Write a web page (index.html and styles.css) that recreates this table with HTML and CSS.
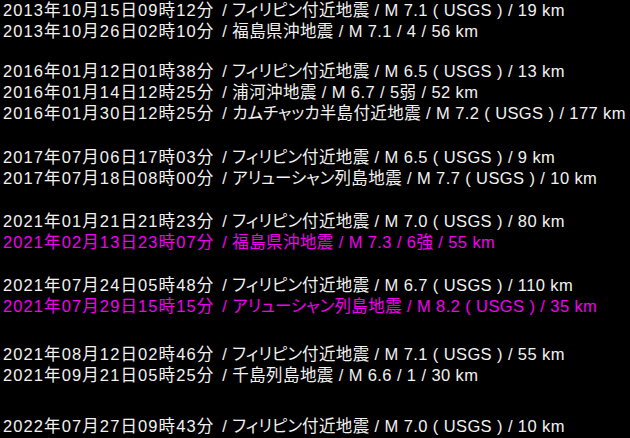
FILE: index.html
```html
<!DOCTYPE html>
<html lang="ja">
<head>
<meta charset="utf-8">
<link rel="stylesheet" href="styles.css">
</head>
<body>
<div class="list">
  <div class="group">
    <div class="line"><span class="dt">2013年10月15日09時12分</span> / <span class="kana">フィリピン</span>付近地震 / M 7.1 ( USGS ) / 19 km</div>
    <div class="line"><span class="dt">2013年10月26日02時10分</span> / 福島県沖地震 / M 7.1 / 4 / 56 km</div>
  </div>
  <div class="group g2">
    <div class="line"><span class="dt">2016年01月12日01時38分</span> / <span class="kana">フィリピン</span>付近地震 / M 6.5 ( USGS ) / 13 km</div>
    <div class="line"><span class="dt">2016年01月14日12時25分</span> / 浦河沖地震 / M 6.7 / 5弱 / 52 km</div>
    <div class="line"><span class="dt">2016年01月30日12時25分</span> / <span class="kana">カムチャッカ</span>半島付近地震 / M 7.2 ( USGS ) / 177 km</div>
  </div>
  <div class="group g3">
    <div class="line"><span class="dt">2017年07月06日17時03分</span> / <span class="kana">フィリピン</span>付近地震 / M 6.5 ( USGS ) / 9 km</div>
    <div class="line"><span class="dt">2017年07月18日08時00分</span> / <span class="kana">アリューシャン</span>列島地震 / M 7.7 ( USGS ) / 10 km</div>
  </div>
  <div class="group g4">
    <div class="line"><span class="dt">2021年01月21日21時23分</span> / <span class="kana">フィリピン</span>付近地震 / M 7.0 ( USGS ) / 80 km</div>
    <div class="line hl"><span class="dt">2021年02月13日23時07分</span> / 福島県沖地震 / M 7.3 / 6強 / 55 km</div>
  </div>
  <div class="group g5">
    <div class="line"><span class="dt">2021年07月24日05時48分</span> / <span class="kana">フィリピン</span>付近地震 / M 6.7 ( USGS ) / 110 km</div>
    <div class="line hl"><span class="dt">2021年07月29日15時15分</span> / <span class="kana">アリューシャン</span>列島地震 / M 8.2 ( USGS ) / 35 km</div>
  </div>
  <div class="group g6">
    <div class="line"><span class="dt">2021年08月12日02時46分</span> / <span class="kana">フィリピン</span>付近地震 / M 7.1 ( USGS ) / 55 km</div>
    <div class="line"><span class="dt">2021年09月21日05時25分</span> / 千島列島地震 / M 6.6 / 1 / 30 km</div>
  </div>
  <div class="group g7">
    <div class="line"><span class="dt">2022年07月27日09時43分</span> / <span class="kana">フィリピン</span>付近地震 / M 7.0 ( USGS ) / 10 km</div>
  </div>
</div>
</body>
</html>
```
FILE: styles.css
```css
html, body {
  margin: 0;
  padding: 0;
  background: #000;
}
body {
  width: 630px;
  height: 438px;
  overflow: hidden;
}
.list {
  display: flex;
  flex-direction: column;
  padding: 0 0 0 3px;
  font-family: "Liberation Sans", "Noto Sans CJK JP", sans-serif;
  font-size: 16.5px;
  letter-spacing: 0.4px;
  line-height: 21px;
  color: #f2f2f2;
  white-space: nowrap;
}
.group { display: flex; flex-direction: column; }
.dt { letter-spacing: 1.1px; margin-right: 3px; }
.kana { font-feature-settings: "palt"; letter-spacing: 0; }
.g2 { margin-top: 19px; }
.g3 { margin-top: 23px; }
.g4 { margin-top: 22px; }
.g5 { margin-top: 22px; }
.g6 { margin-top: 27px; }
.g7 { margin-top: 30px; }
.hl { color: #f000f0; }
```
